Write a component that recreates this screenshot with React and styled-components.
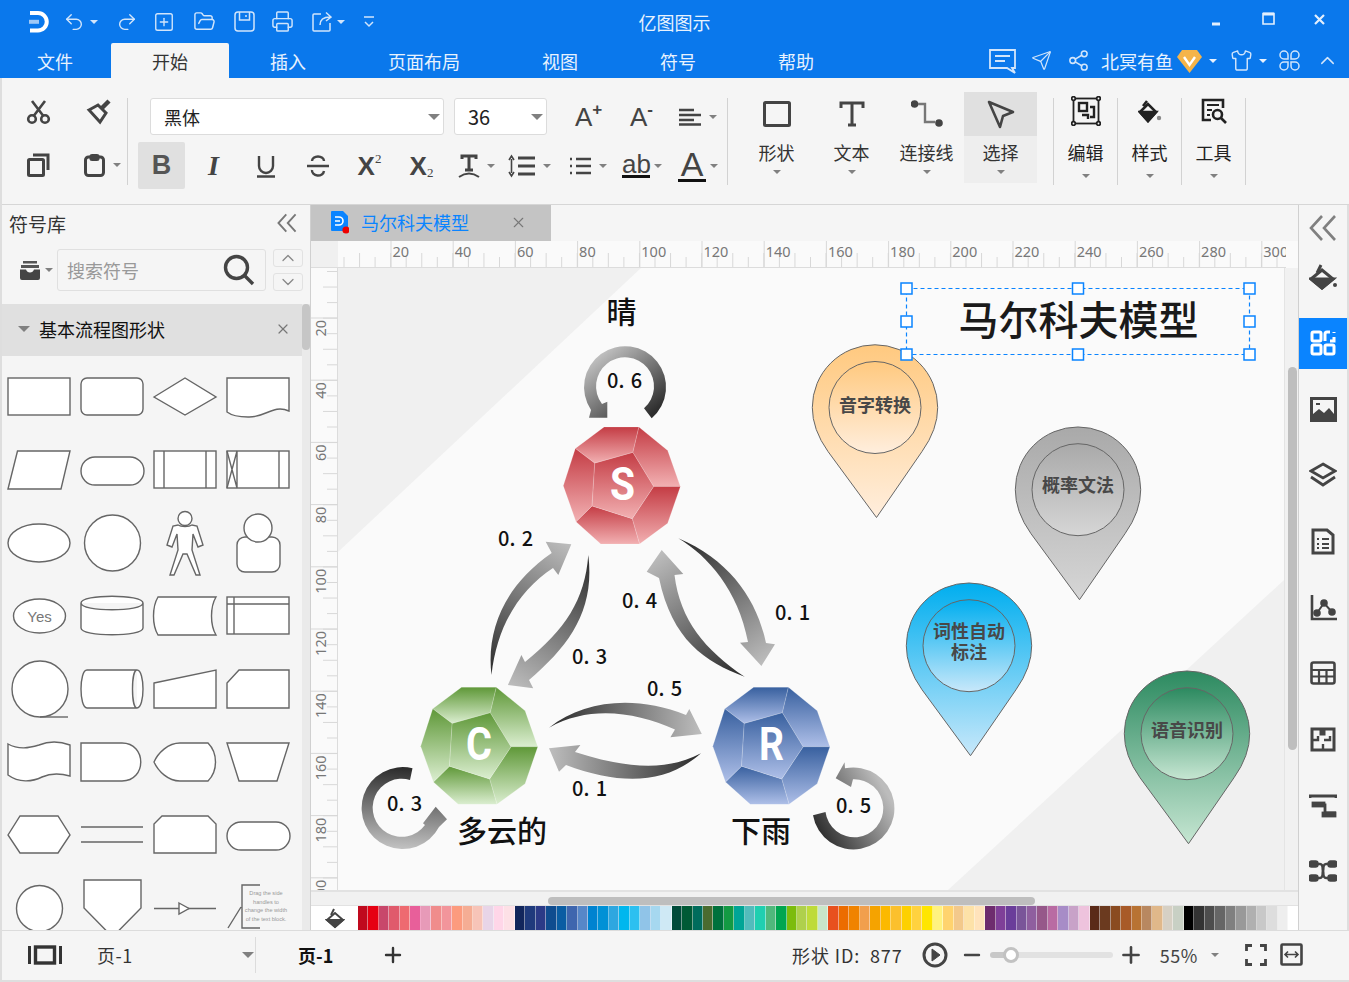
import React from "react";
import styled, { createGlobalStyle } from "styled-components";
import { Undo2, Redo2, SquarePlus, FolderOpen, Printer, Send, Share2, Shirt, ChevronUp, ChevronDown, Plus, Minus, X } from "lucide-react";

const CN = `"Noto Sans CJK SC", "Liberation Sans", sans-serif`;

const GlobalStyle = createGlobalStyle`
  html, body { margin: 0; padding: 0; background: #f5f5f5; }
  body { font-family: ${CN}; color: #333; overflow: hidden; }
  * { box-sizing: border-box; }
`;

const Ico = ({ w = 24, h = 24, vb, sw = 2, children }) => (
  <svg width={w} height={h} viewBox={vb || `0 0 ${w} ${h}`} fill="none" stroke="currentColor" strokeWidth={sw} style={{ display: "block" }}>
    {children}
  </svg>
);

const Page = styled.div`
  width: 1349px;
  height: 982px;
  display: flex;
  flex-direction: column;
  overflow: hidden;
`;

/* ---------- blue title area ---------- */
const TopBar = styled.header`
  height: 78px;
  background: #0a78ec;
  color: #d2e5fb;
  flex-shrink: 0;
`;
const TitleRow = styled.div`
  height: 43px;
  display: grid;
  grid-template-columns: 1fr auto 1fr;
  align-items: center;
`;
const QuickBar = styled.div`
  display: flex;
  align-items: center;
  gap: 18px;
  padding-left: 27px;
`;
const Quick = styled.div`
  display: flex;
  align-items: center;
  gap: 5px;
  margin-right: ${(p) => p.$mr || 0}px;
`;
const AppTitle = styled.div`
  font-size: 18px;
  line-height: 24px;
  color: #e8f2fe;
`;
const WinControls = styled.div`
  display: flex;
  justify-content: flex-end;
  align-items: center;
  padding-right: 24px;
  color: #e3effd;
`;
const Slot = styled.div`
  display: flex;
  align-items: center;
  margin-left: ${(p) => p.$ml || 0}px;
  margin-bottom: ${(p) => p.$mb || 0}px;
`;
const TabRow = styled.nav`
  height: 35px;
  display: flex;
  align-items: stretch;
`;
const MenuTab = styled.div`
  padding: 0 41px;
  font-size: 18px;
  line-height: 36px;
  color: ${(p) => (p.$active ? "#333" : "#e8f2fe")};
  background: ${(p) => (p.$active ? "#f5f5f5" : "transparent")};
  border-radius: 2px 2px 0 0;
  margin-left: ${(p) => p.$ml || 0}px;
`;
const UserTools = styled.div`
  margin-left: auto;
  display: flex;
  align-items: center;
  padding-right: 10px;
`;
const UserName = styled.span`
  font-size: 18px;
  width: 72px;
  white-space: nowrap;
  color: #e8f2fe;
`;
const Caret = styled.span`
  display: inline-block;
  width: 0;
  height: 0;
  border-left: ${(p) => p.$s || 4}px solid transparent;
  border-right: ${(p) => p.$s || 4}px solid transparent;
  border-top: ${(p) => p.$s || 4}px solid ${(p) => p.$c || "#808080"};
  flex-shrink: 0;
`;

/* ---------- everything under the blue bar ---------- */
const Lower = styled.div`
  flex: 1;
  display: flex;
  flex-direction: column;
  border-left: 2px solid #dedede;
  min-height: 0;
`;
const Ribbon = styled.section`
  height: 127px;
  flex-shrink: 0;
  display: flex;
  align-items: flex-start;
  background: #f5f5f5;
  border-bottom: 1px solid #d6d6d6;
  color: #444;
`;
const ClipGroup = styled.div`
  width: 126px;
  height: 87px;
  margin-top: 20px;
  border-right: 1px solid #d2d2d2;
  display: grid;
  grid-template-columns: 67px 58px;
  grid-template-rows: 27px 80px;
  align-items: center;
`;
const ClipCell = styled.div`
  display: flex;
  align-items: center;
  gap: 7px;
  padding-left: ${(p) => p.$pl || 0}px;
`;
const FontGroup = styled.div`
  width: 600px;
  height: 87px;
  margin-top: 20px;
  border-right: 1px solid #d2d2d2;
  padding-left: 10px;
`;
const FontRowTop = styled.div`
  display: flex;
  align-items: center;
  height: 37px;
  padding-left: 12px;
`;
const Combo = styled.div`
  width: ${(p) => p.$w}px;
  height: 37px;
  margin-left: ${(p) => p.$ml || 0}px;
  background: #fff;
  border: 1px solid #dcdcdc;
  border-radius: 3px;
  display: flex;
  align-items: center;
  justify-content: space-between;
  padding: 0 3px 0 13px;
  font-size: ${(p) => p.$fs || 18}px;
  color: #222;
`;
const GrowGlyph = styled.div`
  width: 30px;
  margin-left: ${(p) => p.$ml}px;
  font-family: "Liberation Sans", sans-serif;
  font-size: 26px;
  line-height: 30px;
  color: #444;
  display: flex;
  align-items: flex-start;
`;
const GrowSign = styled.span`
  font-size: 17px;
  font-weight: 700;
  line-height: 16px;
`;
const FontRowBottom = styled.div`
  display: flex;
  align-items: center;
  height: 47px;
  margin-top: 7px;
`;
const FmtBtn = styled.div`
  width: ${(p) => p.$w || 47}px;
  height: 47px;
  margin-right: ${(p) => p.$mr ?? 5}px;
  display: flex;
  align-items: center;
  justify-content: ${(p) => (p.$spread ? "flex-end" : "center")};
  gap: ${(p) => p.$g ?? 7}px;
  background: ${(p) => (p.$on ? "#e0e0e0" : "transparent")};
  border-radius: 2px;
  color: #444;
  font-family: "Liberation Sans", sans-serif;
`;
const BoldB = styled.span`
  font-size: 27px;
  font-weight: 700;
  color: #555;
`;
const ItalicI = styled.span`
  font-family: "Liberation Serif", serif;
  font-size: 28px;
  font-weight: 700;
  font-style: italic;
`;
const ScriptX = styled.span`
  font-size: 26px;
  font-weight: 700;
  display: flex;
  align-items: ${(p) => (p.$sub ? "flex-end" : "flex-start")};
  line-height: 28px;
  small {
    font-family: "Liberation Serif", serif;
    font-size: 13px;
    line-height: 14px;
    font-weight: 400;
  }
`;
const UnderText = styled.span`
  display: block;
  font-size: ${(p) => p.$fs}px;
  line-height: ${(p) => p.$fs - 4}px;
  border-bottom: 3px solid #111;
  color: #444;
  width: 28px;
  text-align: center;
  font-family: "Liberation Sans", sans-serif;
`;
const LargeGroup = styled.div`
  display: flex;
  margin: 14px 0 0 11px;
`;
const LargeBtn = styled.div`
  width: ${(p) => p.$w || 75}px;
  display: flex;
  flex-direction: column;
  align-items: center;
`;
const LargeTop = styled.div`
  width: 100%;
  height: 44px;
  display: flex;
  align-items: center;
  justify-content: center;
  background: ${(p) => (p.$on ? "#e0e0e0" : "transparent")};
`;
const LargeBottom = styled.div`
  width: 100%;
  height: 47px;
  padding-top: 6px;
  display: flex;
  flex-direction: column;
  align-items: center;
  gap: 8px;
  background: ${(p) => (p.$on ? "#eeeeee" : "transparent")};
  font-size: 18px;
  line-height: 20px;
  color: #333;
`;
const ToolGroup = styled.div`
  display: flex;
  margin: 20px 0 0 16px;
  border-left: 1px solid #d2d2d2;
`;
const ToolBtn = styled.div`
  width: 64px;
  height: 87px;
  border-right: 1px solid #d2d2d2;
  display: flex;
  flex-direction: column;
  align-items: center;
  font-size: 18px;
  line-height: 20px;
  color: #222;
`;
const ToolIcon = styled.div`
  height: 26px;
  flex-shrink: 0;
  display: flex;
  align-items: center;
  margin-bottom: 18px;
`;
const ToolCaret = styled.div`
  margin-top: 12px;
  display: flex;
`;

/* ---------- main row ---------- */
const Main = styled.main`
  flex: 1;
  display: flex;
  min-height: 0;
`;
const Sidebar = styled.aside`
  width: 309px;
  flex-shrink: 0;
  border-right: 1px solid #d0d0d0;
  display: flex;
  flex-direction: column;
  overflow: hidden;
  background: #f5f5f5;
`;
const SideHead = styled.div`
  height: 36px;
  display: flex;
  align-items: center;
  justify-content: space-between;
  padding: 0 13px 0 7px;
  font-size: 19px;
  color: #333;
`;
const SideCollapse = styled.span`
  color: #777;
`;
const SearchRow = styled.div`
  height: 63px;
  padding-top: 8px;
  display: flex;
  align-items: flex-start;
`;
const DrawerBtn = styled.div`
  width: 55px;
  height: 42px;
  padding-left: 17px;
  display: flex;
  align-items: center;
  gap: 4px;
  color: #444;
`;
const SearchBox = styled.div`
  width: 209px;
  height: 42px;
  border: 1px solid #e0e0e0;
  border-radius: 3px;
  display: flex;
  align-items: center;
  justify-content: space-between;
  padding: 0 10px 0 9px;
  font-size: 18px;
  color: #999;
`;
const SearchGlass = styled.span`
  color: #444;
`;
const StepCol = styled.div`
  margin-left: 7px;
  display: flex;
  flex-direction: column;
  gap: 6px;
`;
const StepBtn = styled.div`
  width: 30px;
  height: 18px;
  border: 1px solid #e2e2e2;
  border-radius: 3px;
  color: #888;
  display: flex;
  align-items: center;
  justify-content: center;
`;
const SideBody = styled.div`
  flex: 1;
  display: flex;
  min-height: 0;
`;
const SideList = styled.div`
  width: 300px;
  overflow: hidden;
`;
const CategoryHead = styled.div`
  height: 52px;
  background: #e0e0e0;
  display: flex;
  align-items: center;
  padding: 0 11px 2px 16px;
  font-size: 18px;
  color: #111;
`;
const CategoryName = styled.span`
  margin-left: 9px;
  flex: 1;
`;
const SymbolGrid = styled.div`
  display: grid;
  grid-template-columns: repeat(4, 73px);
  grid-auto-rows: 73px;
  padding: 10px 0 0 2px;
`;
const SymbolSvg = styled.svg`
  display: block;
  overflow: visible;
  fill: #fff;
  stroke: #666;
  stroke-width: 1.4;
`;
const SideScroll = styled.div`
  width: 8px;
  background: #eaeaea;
`;
const SideThumb = styled.div`
  height: 46px;
  background: #c6c6c6;
  border-radius: 4px;
`;

const Center = styled.div`
  flex: 1;
  display: flex;
  flex-direction: column;
  min-width: 0;
  background: #f5f5f5;
`;
const DocStrip = styled.div`
  height: 36px;
  flex-shrink: 0;
  display: flex;
`;
const DocTab = styled.div`
  width: 240px;
  background: #c4c4c4;
  display: flex;
  align-items: center;
  padding: 0 24px 2px 19px;
  font-size: 18px;
  color: #0a84ff;
  gap: 12px;
`;
const DocName = styled.span`
  flex: 1;
`;
const RulerRow = styled.div`
  height: 27px;
  flex-shrink: 0;
  display: flex;
  background: #fafafa;
`;
const RulerCorner = styled.div`
  width: 27px;
  background: #f0f0f0;
  border-bottom: 1px solid #ddd;
`;
const CanvasRow = styled.div`
  height: 622px;
  flex-shrink: 0;
  display: flex;
`;
const LeftRuler = styled.div`
  width: 27px;
  background: #fafafa;
  overflow: hidden;
`;
const Canvas = styled.div`
  width: 946px;
  background: #fafafa;
  overflow: hidden;
`;
const VTrack = styled.div`
  width: 14px;
  padding: 99px 1px 0 3px;
  background: #f1f1f1;
  border-left: 1px solid #e4e4e4;
`;
const VThumb = styled.div`
  height: 383px;
  background: #bebebe;
  border-radius: 5px;
`;
const HTrack = styled.div`
  height: 16px;
  flex-shrink: 0;
  padding: 5px 0 0 237px;
  background: #f1f1f1;
  border-top: 2px solid #e2e2e2;
  border-bottom: 1px solid #e2e2e2;
`;
const HThumb = styled.div`
  width: 487px;
  height: 8px;
  background: #bebebe;
  border-radius: 4px;
`;
const PaletteRow = styled.div`
  height: 24px;
  flex-shrink: 0;
  display: flex;
  background: #fff;
`;
const DropBtn = styled.div`
  width: 47px;
  display: flex;
  align-items: center;
  padding-left: 14px;
  color: #444;
`;
const Swatches = styled.div`
  width: 930px;
  display: flex;
`;
const Swatch = styled.div`
  flex: 1;
  background: ${(p) => p.$c};
  border-right: 1px solid rgba(255, 255, 255, 0.45);
`;

const RightPanel = styled.aside`
  width: 51px;
  flex-shrink: 0;
  border-left: 1px solid #d0d0d0;
  border-right: 2px solid #dedede;
  background: #f5f5f5;
  color: #444;
  display: flex;
  flex-direction: column;
  align-items: center;
`;
const PanelHead = styled.div`
  height: 39px;
  padding-top: 9px;
  color: #808080;
`;
const PanelItem = styled.div`
  width: 100%;
  height: 66px;
  display: flex;
  align-items: center;
  justify-content: center;
`;
const PanelActive = styled.div`
  width: 100%;
  height: 51px;
  background: ${(p) => (p.$on ? "#0a84ff" : "transparent")};
  color: ${(p) => (p.$on ? "#fff" : "inherit")};
  display: flex;
  align-items: center;
  justify-content: center;
`;

/* ---------- status bar ---------- */
const StatusBar = styled.footer`
  height: 52px;
  flex-shrink: 0;
  display: flex;
  align-items: center;
  background: #f5f5f5;
  border-top: 1px solid #dcdcdc;
  border-bottom: 2px solid #dedede;
  font-size: 18px;
  color: #333;
  padding-bottom: 2px;
`;
const PageSelect = styled.div`
  width: 158px;
  height: 36px;
  margin-left: 35px;
  display: flex;
  align-items: center;
  justify-content: space-between;
  padding-right: 1px;
  letter-spacing: 0.5px;
`;
const Divider = styled.div`
  width: 1px;
  height: 36px;
  background: #dcdcdc;
`;
const CurrentPage = styled.span`
  margin-left: 42px;
  font-weight: 700;
  color: #111;
`;
const StatusRight = styled.div`
  margin-left: auto;
  display: flex;
  align-items: center;
  padding-right: 46px;
  color: #444;
`;
const ShapeId = styled.span`
  color: #333;
  letter-spacing: 0.9px;
  white-space: pre;
`;
const ZoomPct = styled.span`
  letter-spacing: 0.6px;
`;
const ZoomTrack = styled.div`
  width: 123px;
  height: 6px;
  border-radius: 3px;
  margin-left: 6px;
  background: linear-gradient(to right, #c8c8c8 17%, #e2e2e2 17%);
  position: relative;
`;
const ZoomKnob = styled.div`
  position: absolute;
  left: 13px;
  top: -5px;
  width: 16px;
  height: 16px;
  border-radius: 50%;
  background: #fff;
  border: 3px solid #c2c2c2;
`;

/* ---------- data ---------- */
const PALETTE = [
  "#c00a1e","#e60012","#c8476b","#e05a6c","#ee6a70","#e85f9a","#e79ab8","#f08c8c","#f2959b","#fc9b7e","#f5ad94","#f7c4b8","#e8d5e8","#ffd6e8","#fde0e6",
  "#12265c","#1f3a7c","#2b3a87","#0f4c8f","#0a5da3","#3f66ae","#5787c8","#0083d0","#0091d6","#2ea7e0","#00b7ee","#2cc0f0","#90c4e8","#a6d8f0","#cfe9f5",
  "#004b3a","#005a36","#006c5c","#4a6b2f","#00713c","#139a43","#00a596","#52bcbc","#1fcfb0","#50b87c","#00a650","#7cbc0c","#afd04c","#bedb39","#c8e6c9",
  "#e8501e","#ec6c00","#f08300","#f19f4d","#f5a300","#fcb900","#fbc02d","#fdd000","#ffd23f","#ffe600","#fff27f","#ffd36e","#f3c98b","#fde2a8","#ffe3bb",
  "#6e2c6e","#7f3f98","#6a3d9a","#7a5599","#8f5f9f","#96588a","#b96ba3","#a78cc7","#c8a2c8","#eec3dd",
  "#5a2a18","#6b3a1f","#8a4b20","#a85a28","#b87333","#b88860","#e0b88a","#d6d0c4","#c8d0c4",
  "#000000","#333333","#4d4d4d","#666666","#808080","#999999","#b0b0b0","#c8c8c8","#dddddd","#eeeeee",
];

const SYMBOLS = [
  <rect x="4" y="12" width="62" height="37" />,
  <rect x="4" y="12" width="62" height="37" rx="6" />,
  <path d="M4 31 L35 12 L66 31 L35 49 Z" />,
  <path d="M4 12 H66 V45 C50 38 42 52 25 51 C15 51 8 49 4 46 Z" />,

  <path d="M4 50 L13.5 12 H66 L57 50 Z" />,
  <rect x="4" y="18" width="63" height="28" rx="14" />,
  <g><rect x="4" y="12" width="62" height="37" /><path d="M14 12 V49 M56 12 V49" /></g>,
  <g><rect x="4" y="12" width="62" height="37" /><path d="M14 12 V49 M56 12 V49 M4 12 L14 49 M14 12 L4 49" /></g>,

  <ellipse cx="35" cy="31" rx="31" ry="19" />,
  <circle cx="35.5" cy="31" r="28" />,
  <g><path d="M28 13 C31 15 39 15 42 13 L47 14 L53 33 L48 35 L43 22 L42 38 L50 63 H46 L37 42 H33 L24 63 H20 L28 38 L27 22 L22 35 L17 33 L23 14 Z" /><circle cx="35" cy="6.5" r="7" /></g>,
  <g><rect x="14" y="25" width="43" height="35" rx="8" /><circle cx="35" cy="16" r="14" /></g>,

  <g><ellipse cx="35.5" cy="31" rx="26" ry="17" /><text x="35.5" y="37" textAnchor="middle" fontFamily="Liberation Sans" fontSize="15" fill="#777" stroke="none">Yes</text></g>,
  <path d="M4 18 C4 9 66 9 66 18 V43 C66 52 4 52 4 43 Z M4 18 C4 27 66 27 66 18" />,
  <path d="M8 12 H66 C60 22 60 40 66 50 H8 C2 40 2 22 8 12 Z" />,
  <g><rect x="4" y="12" width="62" height="37" /><path d="M11 12 V49 M4 19 H66" /></g>,

  <g><circle cx="36" cy="31" r="28" /><path d="M36 59 H64" /></g>,
  <path d="M10 12 H60 C68 12 68 50 60 50 H10 C2 50 2 12 10 12 Z M60 12 C54 12 54 50 60 50" />,
  <path d="M4 25 L66 12 V50 H4 Z" />,
  <path d="M16 12 H66 V50 H4 V25 Z" />,

  <path d="M4 13 C15 19 25 17 35 14 C45 10 55 10 66 14 V45 C55 42 47 42 38 46 C28 51 15 52 4 44 Z" />,
  <path d="M4 12 H45 C70 12 70 50 45 50 H4 Z" />,
  <path d="M4 31 C8 22 18 12 30 12 H58 C68 22 68 40 58 50 H30 C18 50 8 40 4 31 Z" />,
  <path d="M4 12 H66 L54 50 H16 Z" />,

  <path d="M4 31 L16 12 H54 L66 31 L54 49 H16 Z" />,
  <path d="M4 23 H66 M4 38 H66" fill="none" />,
  <path d="M12 12 H58 L66 20 V49 H4 V20 Z" />,
  <rect x="4" y="18" width="63" height="28" rx="14" />,

  <circle cx="35.5" cy="31.5" r="23" />,
  <path d="M7 3 H64 V31 L35.5 60 L7 31 Z" />,
  <g><path d="M4 31.5 H66" /><path d="M29 26 L39 31.5 L29 37 Z" /></g>,
  <g>
    <path d="M37 8 H19 V51 H37 M18 30 L5 51" fill="none" />
    <g fill="#999" stroke="none" fontFamily="Liberation Sans" fontSize="5.6" textAnchor="middle">
      <text x="43" y="18">Drag the side</text>
      <text x="43" y="27">handles to</text>
      <text x="43" y="35">change the width</text>
      <text x="43" y="44">of the text block.</text>
    </g>
  </g>,
];

const FACETS = [
  "122,0 226,0 208,76 94,108 36,64",
  "226,0 312,70 350,178 270,178 208,76",
  "270,178 350,178 312,288 228,350 206,274",
  "86,236 206,274 228,350 112,350 38,283",
  "36,64 94,108 86,236 38,283 0,176",
  "94,108 208,76 270,178 206,274 86,236",
];

const PINS = [
  { id: "pinO", cx: 875, cy: 407.5, a: "#ffc97f", b: "#ffeedd", lines: [["音字转换", 411.5]] },
  { id: "pinG", cx: 1078, cy: 489.7, a: "#a9a9a9", b: "#d6d6d6", lines: [["概率文法", 492]] },
  { id: "pinB", cx: 969, cy: 645.7, a: "#00aeef", b: "#c8e8fa", lines: [["词性自动", 638], ["标注", 659]] },
  { id: "pinT", cx: 1187, cy: 733.7, a: "#2c8a60", b: "#c6e6d2", lines: [["语音识别", 737]] },
];

const PROBS = [
  ["0. 6", 607, 387.5], ["0. 2", 498, 546], ["0. 4", 622, 608], ["0. 1", 775, 619.5], ["0. 3", 572, 664],
  ["0. 5", 647, 696], ["0. 1", 572, 796], ["0. 3", 387, 811], ["0. 5", 836, 813],
];

const ARROWS = [
  { id: "a1", g: [491, 675, 571, 545], d: "M491.5 675 C486 630 505 585 551.7 553 L545.7 541.7 L571.3 544.3 L558.3 575 L553 568 C520 590 497 625 491.5 675 Z" },
  { id: "a2", g: [588, 555, 510, 685], d: "M588.3 555 C585 600 565 630 525 662 L521.4 655 L507.9 685 L533.2 688.3 L529 680 C570 645 595 610 588.3 555 Z" },
  { id: "a3", g: [744, 676, 662, 552], d: "M744.6 676.7 C705 662 672 640 659 578 L646.7 571.7 L661.7 550 L683.3 574 L674.5 575 C680 620 705 650 744.6 676.7 Z" },
  { id: "a4", g: [680, 540, 762, 664], d: "M678.3 538.3 C708 556 738 590 748 642 L740 642.7 L761.4 666 L775 644.3 L766 643 C757 600 730 560 678.3 538.3 Z" },
  { id: "a5", g: [549, 727, 700, 732], d: "M549 727.7 C585 700 635 695 686 715 L689.3 709 L701.8 734 L670.4 737.3 L675 729.5 C635 712 590 705 549 727.7 Z" },
  { id: "a6", g: [701, 753, 551, 750], d: "M701 753.3 C670 770 630 770 575 752 L580.4 745 L549 748.3 L559 771.7 L566 765 C620 785 665 785 701 753.3 Z" },
  { id: "a7", g: [600, 350, 650, 415], d: "M651.7 418.3 A41 41 0 1 0 591 410 L589 417.7 L607.3 417.7 L607.3 401.7 L602 404 A29 29 0 1 1 644 408.3 Z" },
  { id: "a8", g: [405, 767, 400, 850], d: "M412.5 768.3 A41 41 0 1 0 439 827 L447 819.3 L435.7 806.7 L423 823.3 L425 825 A29 29 0 1 1 410 780 Z" },
  { id: "a9", g: [815, 830, 885, 790], d: "M813 815.3 A41 41 0 1 0 845 768.3 L844.6 762.3 L835.7 778.3 L851 787 L853 779.3 A29 29 0 1 1 825.5 812 Z" },
];

/* ---------- drawings ---------- */
const Gem = ({ id, x, y, top, bottom, letter, lx, lw }) => (
  <g>
    <defs>
      <linearGradient id={id} x1="0" y1="0" x2="0" y2="1">
        <stop offset="0" stopColor={top} />
        <stop offset="1" stopColor={bottom} />
      </linearGradient>
    </defs>
    <g transform={`translate(${x} ${y}) scale(0.3345)`}>
      {FACETS.map((pts) => (
        <polygon key={pts} points={pts} fill={`url(#${id})`} stroke="rgba(255,255,255,0.35)" strokeWidth="1.5" />
      ))}
    </g>
    <text x={lx} y={y + 73} textLength={lw} lengthAdjust="spacingAndGlyphs" fontFamily="Roboto, sans-serif" fontWeight="700" fontSize="46" fill="#fff">
      {letter}
    </text>
  </g>
);

const Pin = ({ id, cx, cy, a, b, lines }) => (
  <g>
    <defs>
      <linearGradient id={id} x1="0" y1="0" x2="0" y2="1">
        <stop offset="0" stopColor={a} />
        <stop offset="1" stopColor={b} />
      </linearGradient>
    </defs>
    <path
      transform={`translate(${cx} ${cy})`}
      d="M1.5 110 L47 44 Q62.7 22 62.7 0 A62.7 62.7 0 1 0 -62.7 0 Q-62.7 22 -47 44 Z"
      fill={`url(#${id})`}
      stroke="#666"
      strokeWidth="1"
    />
    <circle cx={cx} cy={cy} r="46" fill={`url(#${id})`} stroke="#666" strokeWidth="1" />
    {lines.map(([t, by]) => (
      <text key={t} x={cx} y={by} textAnchor="middle" fontFamily={CN} fontWeight="700" fontSize="18" fill="#484848">
        {t}
      </text>
    ))}
  </g>
);

const Handle = ({ x, y }) => <rect x={x - 5.5} y={y - 5.5} width="11" height="11" fill="#fff" stroke="#0a84ff" strokeWidth="1.5" />;

const Diagram = () => (
  <svg width="946" height="622" viewBox="338 268 946 622" style={{ display: "block" }}>
    <polygon points="338,268 641,268 338,552" fill="#f0f0f0" />
    <polygon points="1284,580 1284,890 948,890" fill="#f0f0f0" />

    <defs>
      {ARROWS.map(({ id, g }) => (
        <linearGradient key={id} id={id} gradientUnits="userSpaceOnUse" x1={g[0]} y1={g[1]} x2={g[2]} y2={g[3]}>
          <stop offset="0" stopColor={id === "a7" ? "#c6c6c6" : "#2a2a2a"} />
          <stop offset="1" stopColor={id === "a7" ? "#2e2e2e" : id === "a8" ? "#c4c4c4" : "#bcbcbc"} />
        </linearGradient>
      ))}
    </defs>
    {ARROWS.map(({ id, d }) => (
      <path key={id} d={d} fill={`url(#${id})`} />
    ))}

    <Gem id="gemS" x={563.3} y={427} top="#c43c44" bottom="#f2b0b2" letter="S" lx={610} lw={25} />
    <Gem id="gemC" x={420.7} y={687.3} top="#5f9838" bottom="#dbeed0" letter="C" lx={466} lw={26} />
    <Gem id="gemR" x={712.8} y={687.3} top="#38609f" bottom="#aebfe8" letter="R" lx={759} lw={25} />

    <g fontFamily={CN} fontWeight="500" fontSize="20" fill="#111" wordSpacing="2">
      {PROBS.map(([t, x, y]) => (
        <text key={`${t}${x}`} x={x} y={y}>{t}</text>
      ))}
    </g>
    <g fontFamily={CN} fontWeight="500" fontSize="30" fill="#111">
      <text x="606.5" y="323">晴</text>
      <text x="457" y="842">多云的</text>
      <text x="731" y="842">下雨</text>
    </g>

    {PINS.map((p) => (
      <Pin key={p.id} {...p} />
    ))}

    <text x="1078.5" y="334.5" textAnchor="middle" fontFamily={CN} fontWeight="500" fontSize="40" fill="#1a1a1a">马尔科夫模型</text>
    <rect x="906.5" y="288.5" width="343" height="66" fill="none" stroke="#0a84ff" strokeWidth="1.2" strokeDasharray="4 3" />
    {[906.5, 1078, 1249.5].map((x) => [288.5, 354.5].map((y) => <Handle key={`${x}${y}`} x={x} y={y} />))}
    <Handle x={906.5} y={321.5} />
    <Handle x={1249.5} y={321.5} />
  </svg>
);

const TopRuler = () => {
  const majors = Array.from({ length: 15 }, (_, i) => 391 + 62.2 * i);
  const ticks = Array.from({ length: 62 }, (_, i) => 344 + 15.55 * i);
  return (
    <svg width="948" height="27" viewBox="338 241 948 27" style={{ display: "block" }}>
      {ticks.map((x, i) => (
        <line key={x} x1={x} x2={x} y1={(i + 1) % 2 === 0 ? 253 : 257} y2="267" stroke="#d8d8d8" />
      ))}
      <line x1="338" x2="1287" y1="267.5" y2="267.5" stroke="#dcdcdc" />
      {majors.map((x, i) => (
        <g key={x}>
          <line x1={x} x2={x} y1="241" y2="267" stroke="#d8d8d8" />
          <text x={x + 1.5} y="256.5" fontFamily="Noto Sans, sans-serif" fontSize="14.5" fill="#777">{(i + 1) * 20}</text>
        </g>
      ))}
    </svg>
  );
};

const SideRuler = () => {
  const majors = Array.from({ length: 10 }, (_, i) => 318 + 62.2 * i);
  const ticks = Array.from({ length: 42 }, (_, i) => 271.5 + 15.55 * i);
  return (
    <svg width="27" height="622" viewBox="311 268 27 622" style={{ display: "block" }}>
      {ticks.map((y, i) => (
        <line key={y} x1={i % 2 === 0 ? 327 : 323} x2="338" y1={y} y2={y} stroke="#d8d8d8" />
      ))}
      <line x1="337.5" x2="337.5" y1="268" y2="890" stroke="#dcdcdc" />
      {majors.map((y, i) => (
        <g key={y}>
          <line x1="311" x2="338" y1={y} y2={y} stroke="#d8d8d8" />
          <text x="326" y={y + 2} textAnchor="end" transform={`rotate(-90 326 ${y + 2})`} fontFamily="Noto Sans, sans-serif" fontSize="14.5" fill="#777">{(i + 1) * 20}</text>
        </g>
      ))}
    </svg>
  );
};

const DoubleLeft = ({ w, h }) => (
  <Ico w={w} h={h} vb="0 0 28 28" sw={2.6}>
    <path d="M13 2 L2 14 L13 26 M26 2 L15 14 L26 26" />
  </Ico>
);

/* ---------- page ---------- */
const PANEL_ICONS = [
  <Ico w={28} h={30} vb="0 0 28 30" sw={3}><path d="M2 17 L13 8 L24 17 L13 26 Z" /><path d="M2 17 H24 L13 26 Z" fill="currentColor" /><path d="M8 11 L12 3" /><circle cx="26" cy="23" r="2" fill="currentColor" stroke="none" /></Ico>,
  <Ico w={26} h={26} sw={3}><rect x="2" y="2" width="9" height="9" rx="1.5" /><rect x="2" y="15" width="9" height="9" rx="1.5" /><rect x="15" y="15" width="9" height="9" rx="1.5" /><path d="M15 11 V4 Q15 2 17 2 H20 M24 2 V3 M24 7 V11 H20" /></Ico>,
  <Ico w={27} h={25} sw={3}><rect x="1.5" y="1.5" width="24" height="22" /><path d="M3 22 V17 L9 12 L14 16 L19 11 L24 17 V22 Z" fill="currentColor" stroke="none" /><path d="M6 7 H10" strokeWidth="2" /></Ico>,
  <Ico w={28} h={26} sw={2.8}><path d="M14 2 L26 9 L14 16 L2 9 Z" /><path d="M2 15 L14 23 L26 15" /></Ico>,
  <Ico w={24} h={27} sw={3}><path d="M2 2 H16 L22 7 V25 H2 Z" /><path d="M6 11 H8 M11 11 H18 M6 16 H8 M11 16 H18 M6 20 H8 M11 20 H18" strokeWidth="2" /></Ico>,
  <Ico w={27} h={27} sw={2.6}><path d="M2 1 V25 H27" /><path d="M7 19 L14 9 L22 18" strokeWidth="2" /><circle cx="7" cy="19" r="2.5" fill="currentColor" /><circle cx="14" cy="9" r="2.5" fill="currentColor" /><circle cx="22" cy="18" r="2.5" fill="currentColor" /></Ico>,
  <Ico w={26} h={24} sw={2.6}><rect x="1.5" y="1.5" width="23" height="21" rx="2" /><path d="M1.5 9 H24.5 M1.5 15.5 H24.5 M9 9 V22 M16.5 9 V22" strokeWidth="2.2" /></Ico>,
  <Ico w={26} h={26} sw={3}><path d="M2 3 H11 V8 H14 V3 H24 V24 H2 Z" /><path d="M8 10 V14 H2 M14 14 H20 V10 M13 18 V24" strokeWidth="2.4" /></Ico>,
  <Ico w={28} h={25} sw={2.8}><path d="M1 5 V3 H27 V5" /><path d="M5 12 H16 V20 H27" /><rect x="4" y="10" width="11" height="3" fill="currentColor" /><rect x="14" y="20" width="12" height="3" fill="currentColor" /></Ico>,
  <Ico w={28} h={24} sw={2.4}><path d="M8 5 H11 C15 5 13 12 14 12 C15 12 13 5 17 5 H20 M8 19 H11 C15 19 13 12 14 12 C15 12 13 19 17 19 H20" /><rect x="0.5" y="2.5" width="8" height="5" rx="2" fill="currentColor" /><rect x="19.5" y="2.5" width="8" height="5" rx="2" fill="currentColor" /><rect x="0.5" y="16.5" width="8" height="5" rx="2" fill="currentColor" /><rect x="19.5" y="16.5" width="8" height="5" rx="2" fill="currentColor" /></Ico>,
];

const LARGE = [
  { label: "形状", icon: <Ico w={28} h={26} sw={3}><rect x="1.5" y="1.5" width="25" height="23" rx="1" /></Ico> },
  { label: "文本", icon: <Ico w={26} h={26} sw={3}><path d="M2 7 V2 H24 V7 M13 2 V24 M9 24 H17" /></Ico> },
  { label: "连接线", icon: <Ico w={32} h={28} sw={2.4}><circle cx="3.5" cy="4" r="2.6" fill="currentColor" /><path d="M7 4 H14 V22 H24" stroke="#777" /><circle cx="28" cy="23" r="2.6" fill="currentColor" /></Ico> },
  { label: "选择", on: true, icon: <Ico w={30} h={30} sw={2.6}><path d="M3 3 L27 13 L17 17 L14 28 Z" strokeLinejoin="round" /></Ico> },
];

const TOOLS = [
  { label: "编辑", icon: <Ico w={30} h={30} sw={1.8}><rect x="2.5" y="2.5" width="25" height="25" /><circle cx="2.5" cy="2.5" r="1.8" fill="#f5f5f5" /><circle cx="27.5" cy="2.5" r="1.8" fill="#f5f5f5" /><circle cx="2.5" cy="27.5" r="1.8" fill="#f5f5f5" /><circle cx="27.5" cy="27.5" r="1.8" fill="#f5f5f5" /><rect x="8" y="7" width="8" height="8" strokeWidth="2.4" /><path d="M19 11 H23 V21 H19 M11 19 H17 V23" strokeWidth="2.4" /></Ico> },
  { label: "样式", icon: <Ico w={24} h={24} sw={2.6}><path d="M2 13 L10 5 L18 13 L10 22 Z" /><path d="M2 13 H18 L10 22 Z" fill="currentColor" /><path d="M5 7 L9 2" /><circle cx="21" cy="19" r="2.2" fill="#888" stroke="none" /></Ico> },
  { label: "工具", icon: <Ico w={26} h={26} sw={2.6}><path d="M10 22 H2 V2 H22 V10" /><path d="M6 7 H18 M6 12 H11 M6 17 H9" strokeWidth="2" /><circle cx="16.5" cy="16.5" r="4.5" /><path d="M20 20 L25 25" /></Ico> },
];

export default function App() {
  return (
    <Page>
      <GlobalStyle />
      <TopBar>
        <TitleRow>
          <QuickBar>
            <Quick $mr={-4}>
              <Ico w={22} h={23} sw={4}>
                <path d="M3 3 H11 A8.5 8.5 0 0 1 11 20.5 H3" stroke="#fff" />
                <path d="M2 11.8 H12" stroke="#9fc9f7" />
              </Ico>
            </Quick>
            <Quick><Undo2 size={22} strokeWidth={1.5} /><Caret $c="#d2e5fb" /></Quick>
            <Quick $mr={-3}><Redo2 size={22} strokeWidth={1.5} /></Quick>
            <Quick><SquarePlus size={22} strokeWidth={1.5} /></Quick>
            <Quick><FolderOpen size={23} strokeWidth={1.5} /></Quick>
            <Quick $mr={-2}>
              <Ico w={21} h={21} sw={1.5}>
                <rect x="1" y="1" width="19" height="19" rx="3" />
                <path d="M5.5 1 V9 H15.5 V1 M12 4 V6" />
              </Ico>
            </Quick>
            <Quick><Printer size={23} strokeWidth={1.5} /></Quick>
            <Quick>
              <Ico w={20} h={21} sw={1.5}>
                <path d="M9 3 H2 Q1 3 1 4 V19 Q1 20 2 20 H17 Q18 20 18 19 V12" />
                <path d="M8 14 C8 8 12 6 18 6 M14 1.5 L19 6 L14 10" />
              </Ico>
              <Caret $c="#d2e5fb" />
            </Quick>
            <Quick>
              <Ico w={12} h={14} sw={1.5}>
                <path d="M1 2 H11 M2 7 L6 11 L10 7" />
              </Ico>
            </Quick>
          </QuickBar>
          <AppTitle>亿图图示</AppTitle>
          <WinControls>
            <Slot><Ico w={10} h={8} sw={3}><path d="M1 6 H9" /></Ico></Slot>
            <Slot $ml={41} $mb={6}><Ico w={13} h={13} sw={1.6}><path d="M1 1.5 H12 V12 H1 Z" /><path d="M1 2 H12" strokeWidth="3" /></Ico></Slot>
            <Slot $ml={39} $mb={5}><Ico w={11} h={11} sw={2.2}><path d="M1 1 L10 10 M10 1 L1 10" /></Ico></Slot>
          </WinControls>
        </TitleRow>
        <TabRow>
          <MenuTab $ml={-4}>文件</MenuTab>
          <MenuTab $ml={-3} $active>开始</MenuTab>
          <MenuTab>插入</MenuTab>
          <MenuTab>页面布局</MenuTab>
          <MenuTab>视图</MenuTab>
          <MenuTab>符号</MenuTab>
          <MenuTab>帮助</MenuTab>
          <UserTools>
            <Slot>
              <Ico w={29} h={26} sw={1.8}>
                <path d="M2 2 H27 V20 H24 L27 25 L19 20 H2 Z" />
                <path d="M7 8 H22 M7 13 H17" />
              </Ico>
            </Slot>
            <Slot $ml={14}><Send size={21} strokeWidth={1.4} /></Slot>
            <Slot $ml={15}><Share2 size={23} strokeWidth={1.6} /></Slot>
            <Slot $ml={11}><UserName>北冥有鱼</UserName></Slot>
            <Slot $ml={3}>
              <Ico w={27} h={26}>
                <path d="M6 2 H21 L26 9 L13.5 25 L1 9 Z" fill="#f5b44a" stroke="none" />
                <path d="M8 9 L13.5 17 L19 9" stroke="#fff" strokeWidth="2.4" />
              </Ico>
            </Slot>
            <Slot $ml={6}><Caret $c="#e8f2fe" /></Slot>
            <Slot $ml={13}><Shirt size={23} strokeWidth={1.5} /></Slot>
            <Slot $ml={6}><Caret $c="#e8f2fe" /></Slot>
            <Slot $ml={12}>
              <Ico w={21} h={21} sw={1.5}>
                <path d="M9 9 H5 A4 4 0 1 1 9 5 Z M12 9 V5 A4 4 0 1 1 16 9 Z M9 12 V16 A4 4 0 1 1 5 12 Z M12 12 H16 A4 4 0 1 1 12 16 Z" />
              </Ico>
            </Slot>
            <Slot $ml={16}><ChevronUp size={23} strokeWidth={1.5} /></Slot>
          </UserTools>
        </TabRow>
      </TopBar>

      <Lower>
        <Ribbon>
          <ClipGroup>
            <ClipCell $pl={24}>
              <Ico w={26} h={26} sw={2.6}>
                <circle cx="6" cy="20" r="3.8" />
                <circle cx="19" cy="20" r="3.8" />
                <path d="M8 16.5 L19 2 M17 16.5 L6 2" />
              </Ico>
            </ClipCell>
            <ClipCell $pl={17}>
              <Ico w={26} h={26} sw={3}>
                <path d="M3 11 L12 6 L20 14 L14 23 Z" />
                <path d="M16 9 L23 2" strokeWidth="4.4" />
              </Ico>
            </ClipCell>
            <ClipCell $pl={25}>
              <Ico w={23} h={24} sw={3}>
                <rect x="1.5" y="6.5" width="15" height="16" rx="1" />
                <path d="M6 2 H21 V17" />
              </Ico>
            </ClipCell>
            <ClipCell $pl={15}>
              <Ico w={22} h={24} sw={3}>
                <rect x="1.5" y="4" width="18" height="18.5" rx="3" />
                <rect x="6" y="1.5" width="9" height="6" rx="1.5" fill="currentColor" strokeWidth="1" />
              </Ico>
              <Caret />
            </ClipCell>
          </ClipGroup>

          <FontGroup>
            <FontRowTop>
              <Combo $w={294}>黑体<Caret $s={6} /></Combo>
              <Combo $w={93} $ml={10} $fs={20}>36<Caret $s={6} /></Combo>
              <GrowGlyph $ml={28}>A<GrowSign>+</GrowSign></GrowGlyph>
              <GrowGlyph $ml={25}>A<GrowSign>-</GrowSign></GrowGlyph>
              <Slot $ml={18}>
                <Ico w={24} h={18} sw={2.6}><path d="M1 2 H16 M1 7 H23 M1 12 H16 M1 16.5 H23" /></Ico>
              </Slot>
              <Slot $ml={7}><Caret /></Slot>
            </FontRowTop>
            <FontRowBottom>
              <FmtBtn $on><BoldB>B</BoldB></FmtBtn>
              <FmtBtn><ItalicI>I</ItalicI></FmtBtn>
              <FmtBtn>
                <Ico w={20} h={24} sw={2.4}><path d="M3 2 V12 A7 7 0 0 0 17 12 V2 M1 22.5 H19" /></Ico>
              </FmtBtn>
              <FmtBtn>
                <Ico w={24} h={24} sw={2.4}><path d="M18 7 A6 4.5 0 0 0 6 7 M6 16 A6 5 0 0 0 18 17 M1 12 H23" /></Ico>
              </FmtBtn>
              <FmtBtn><ScriptX>X<small>2</small></ScriptX></FmtBtn>
              <FmtBtn><ScriptX $sub>X<small>2</small></ScriptX></FmtBtn>
              <FmtBtn $w={45} $mr={5} $spread>
                <Ico w={22} h={24} sw={3}><path d="M4 5 V2 H18 V5 M11 2 V16 M7 16 H15" /><path d="M1 23 Q11 16 21 23" strokeWidth="2" /></Ico>
                <Caret />
              </FmtBtn>
              <FmtBtn $w={51} $mr={7} $spread>
                <Ico w={28} h={24} sw={2.8}><path d="M3.5 5 V19" strokeWidth="1.6" /><path d="M1 6 L3.5 2 L6 6 M1 18 L3.5 22 L6 18" strokeWidth="1.6" /><path d="M10 4 H27 M10 12 H27 M10 20 H27" /></Ico>
                <Caret />
              </FmtBtn>
              <FmtBtn $w={49} $mr={6} $spread>
                <Ico w={24} h={20} sw={2.6}><path d="M2 3 H4 M8 3 H23 M2 10 H4 M8 10 H23 M2 17 H4 M8 17 H23" /></Ico>
                <Caret />
              </FmtBtn>
              <FmtBtn $w={49} $mr={7} $spread $g={4}>
                <UnderText $fs={26}>ab</UnderText>
                <Caret />
              </FmtBtn>
              <FmtBtn $w={49} $mr={0} $spread $g={4}>
                <UnderText $fs={34}>A</UnderText>
                <Caret />
              </FmtBtn>
            </FontRowBottom>
          </FontGroup>

          <LargeGroup>
            {LARGE.map((b) => (
              <LargeBtn key={b.label} $w={b.on ? 73 : 75}>
                <LargeTop $on={b.on}>{b.icon}</LargeTop>
                <LargeBottom $on={b.on}>
                  {b.label}
                  <Caret />
                </LargeBottom>
              </LargeBtn>
            ))}
          </LargeGroup>

          <ToolGroup>
            {TOOLS.map((t) => (
              <ToolBtn key={t.label}>
                <ToolIcon>{t.icon}</ToolIcon>
                {t.label}
                <ToolCaret><Caret /></ToolCaret>
              </ToolBtn>
            ))}
          </ToolGroup>
        </Ribbon>

        <Main>
          <Sidebar>
            <SideHead>
              符号库
              <SideCollapse><DoubleLeft w={20} h={20} /></SideCollapse>
            </SideHead>
            <SearchRow>
              <DrawerBtn>
                <Ico w={22} h={22} sw={0}>
                  <path d="M4 2 H18 V4.5 H4 Z M2 6 H20 V9 H2 Z" fill="#555" />
                  <path d="M1 10.5 H7 Q8 13.5 11 13.5 Q14 13.5 15 10.5 H21 V19 Q21 21 19 21 H3 Q1 21 1 19 Z" fill="currentColor" />
                </Ico>
                <Caret />
              </DrawerBtn>
              <SearchBox>
                搜索符号
                <SearchGlass>
                  <Ico w={32} h={32} sw={3.4}>
                    <circle cx="13.5" cy="13.5" r="11" />
                    <path d="M21.5 21.5 L30 30" />
                  </Ico>
                </SearchGlass>
              </SearchBox>
              <StepCol>
                <StepBtn><ChevronUp size={20} strokeWidth={1.5} /></StepBtn>
                <StepBtn><ChevronDown size={20} strokeWidth={1.5} /></StepBtn>
              </StepCol>
            </SearchRow>
            <SideBody>
              <SideList>
                <CategoryHead>
                  <Caret $s={6} />
                  <CategoryName>基本流程图形状</CategoryName>
                  <X size={16} color="#777" strokeWidth={1.8} />
                </CategoryHead>
                <SymbolGrid>
                  {SYMBOLS.map((s, i) => (
                    <SymbolSvg key={i} width="73" height="73" viewBox="0 0 73 73">{s}</SymbolSvg>
                  ))}
                </SymbolGrid>
              </SideList>
              <SideScroll><SideThumb /></SideScroll>
            </SideBody>
          </Sidebar>

          <Center>
            <DocStrip>
              <DocTab>
                <Ico w={19} h={24} sw={0}>
                  <path d="M1 2 Q1 1 2 1 H13 L18 6 V20 Q18 21 17 21 H2 Q1 21 1 20 Z" fill="#0a84ff" />
                  <path d="M5 7 H9 A4 4 0 0 1 9 15 H5 M5 11 H10" stroke="#fff" strokeWidth="1.6" />
                  <circle cx="16" cy="20" r="3.6" fill="#ee0000" />
                </Ico>
                <DocName>马尔科夫模型</DocName>
                <X size={17} color="#777" strokeWidth={1.6} />
              </DocTab>
            </DocStrip>
            <RulerRow>
              <RulerCorner />
              <TopRuler />
            </RulerRow>
            <CanvasRow>
              <LeftRuler><SideRuler /></LeftRuler>
              <Canvas><Diagram /></Canvas>
              <VTrack><VThumb /></VTrack>
            </CanvasRow>
            <HTrack><HThumb /></HTrack>
            <PaletteRow>
              <DropBtn>
                <Ico w={20} h={22} sw={2}>
                  <path d="M2 13 L10 6 L18 13 L10 20 Z" />
                  <path d="M2 13 H18 L10 20 Z" fill="currentColor" />
                  <path d="M6 8 L9 2" />
                </Ico>
              </DropBtn>
              <Swatches>
                {PALETTE.map((c, i) => (
                  <Swatch key={i} $c={c} />
                ))}
              </Swatches>
            </PaletteRow>
          </Center>

          <RightPanel>
            <PanelHead><DoubleLeft w={28} h={28} /></PanelHead>
            {PANEL_ICONS.map((icon, i) => (
              <PanelItem key={i}>
                <PanelActive $on={i === 1}>{icon}</PanelActive>
              </PanelItem>
            ))}
          </RightPanel>
        </Main>

        <StatusBar>
          <Slot $ml={26}>
            <Ico w={34} h={20} sw={3}>
              <path d="M1.5 1 V19 M32.5 1 V19" />
              <rect x="7.5" y="2" width="19" height="16" strokeWidth="3.4" />
            </Ico>
          </Slot>
          <PageSelect>
            页-1
            <Caret $s={6} />
          </PageSelect>
          <Divider />
          <CurrentPage>页-1</CurrentPage>
          <Slot $ml={48}><Plus size={24} strokeWidth={2.4} /></Slot>
          <StatusRight>
            <ShapeId>形状 ID:  877</ShapeId>
            <Slot $ml={19}>
              <Ico w={26} h={26} sw={3}>
                <circle cx="13" cy="13" r="11" />
                <path d="M10 7 L18 13 L10 19 Z" fill="currentColor" strokeWidth="1" />
              </Ico>
            </Slot>
            <Slot $ml={12}><Minus size={24} strokeWidth={2.4} /></Slot>
            <ZoomTrack><ZoomKnob /></ZoomTrack>
            <Slot $ml={5}><Plus size={26} strokeWidth={2.4} /></Slot>
            <Slot $ml={16}><ZoomPct>55%</ZoomPct></Slot>
            <Slot $ml={13}><Caret /></Slot>
            <Slot $ml={26}>
              <Ico w={22} h={22} sw={2.8}>
                <path d="M1.5 7 V1.5 H7 M15 1.5 H20.5 V7 M20.5 15 V20.5 H15 M7 20.5 H1.5 V15" />
              </Ico>
            </Slot>
            <Slot $ml={13}>
              <Ico w={23} h={23} sw={2.6}>
                <rect x="1.5" y="1.5" width="20" height="20" rx="1" />
                <path d="M5 11.5 H18 M8 8.5 L5 11.5 L8 14.5 M15 8.5 L18 11.5 L15 14.5" strokeWidth="1.6" />
              </Ico>
            </Slot>
          </StatusRight>
        </StatusBar>
      </Lower>
    </Page>
  );
}
